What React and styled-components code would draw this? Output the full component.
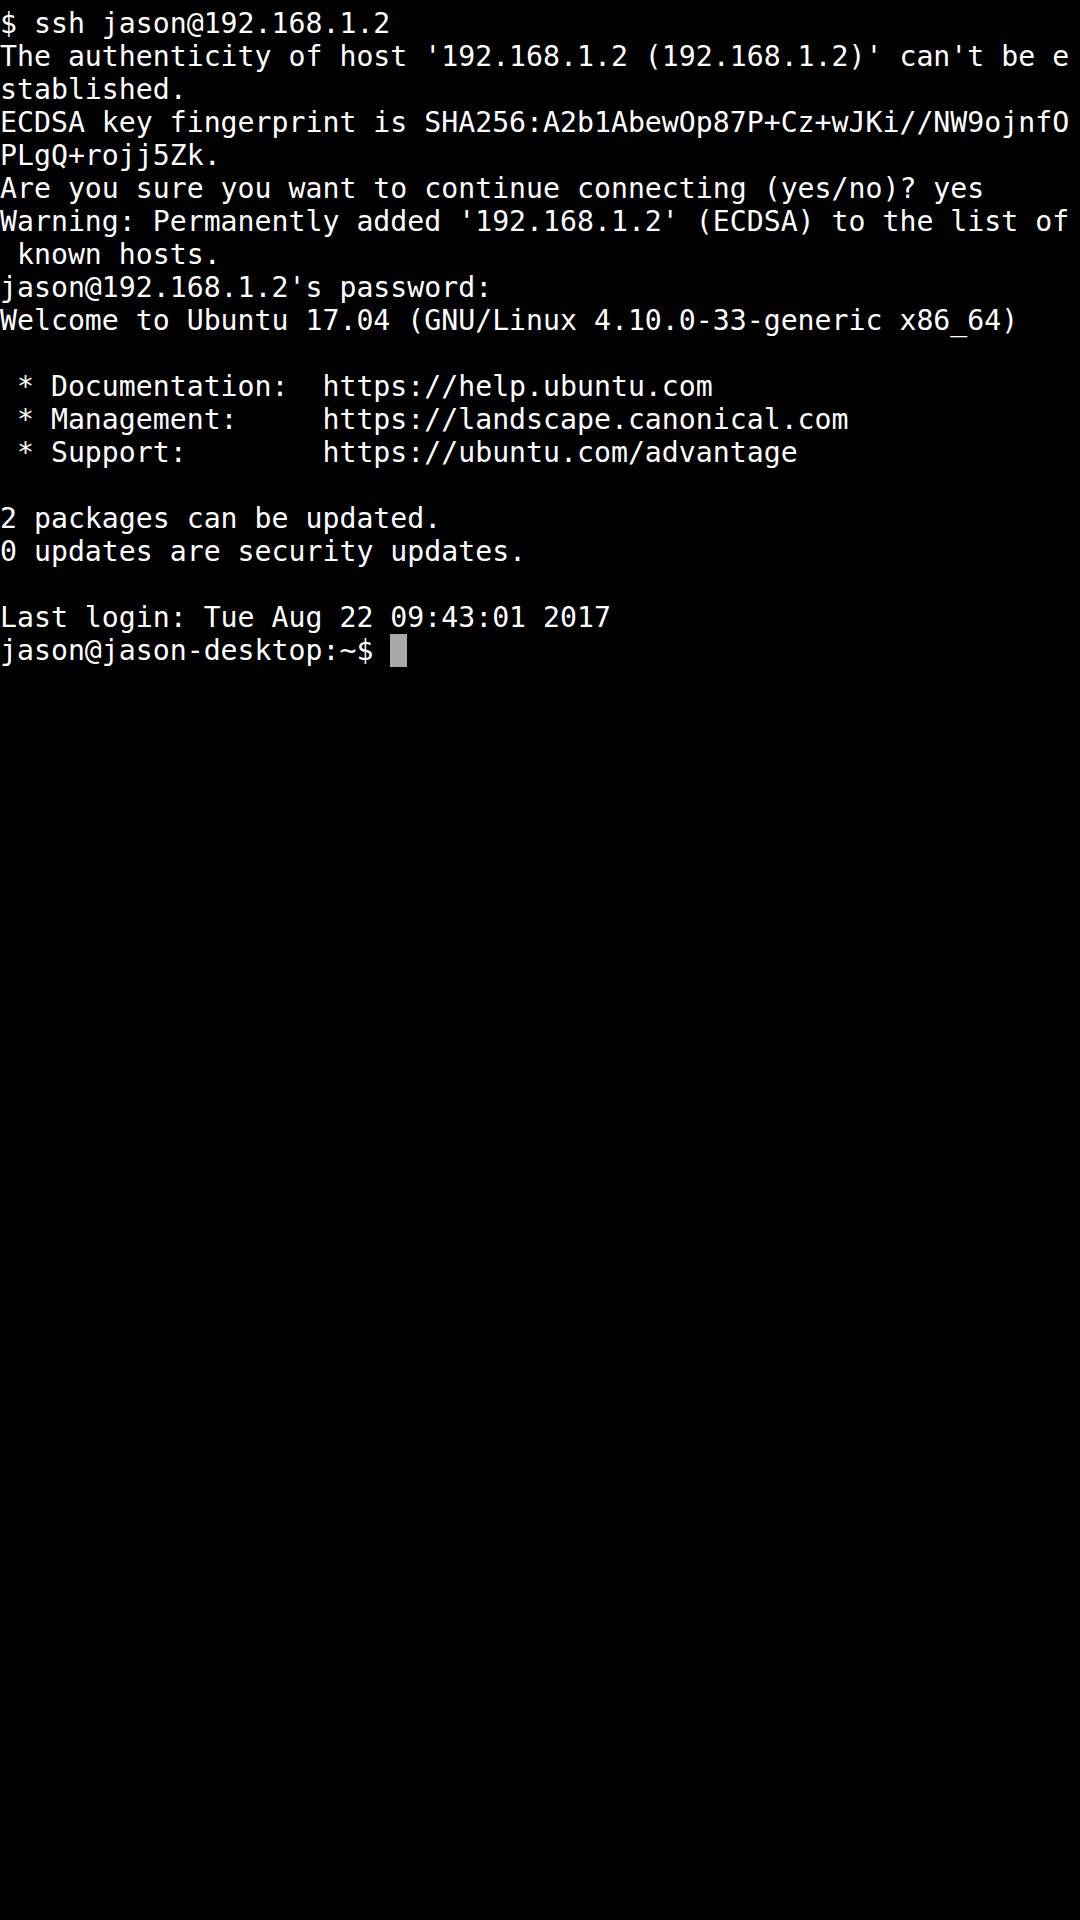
import styled, { createGlobalStyle } from "styled-components";

const GlobalStyle = createGlobalStyle`
  html, body {
    margin: 0;
    padding: 0;
    background: #000;
  }
`;

const Screen = styled.main`
  width: 1080px;
  height: 1920px;
  background: #000;
  color: #fff;
  font-family: "DejaVu Sans Mono", "Liberation Mono", monospace;
  font-size: 28.2px;
  line-height: 33px;
  padding-top: 7px;
  box-sizing: border-box;
  overflow: hidden;
`;

const Line = styled.div`
  white-space: pre;
  height: 33px;
`;

const Cursor = styled.span`
  display: inline-block;
  width: 17px;
  height: 33px;
  background: #a8a8a8;
  vertical-align: top;
`;

const lines = [
  "$ ssh jason@192.168.1.2",
  "The authenticity of host '192.168.1.2 (192.168.1.2)' can't be e",
  "stablished.",
  "ECDSA key fingerprint is SHA256:A2b1AbewOp87P+Cz+wJKi//NW9ojnfO",
  "PLgQ+rojj5Zk.",
  "Are you sure you want to continue connecting (yes/no)? yes",
  "Warning: Permanently added '192.168.1.2' (ECDSA) to the list of",
  " known hosts.",
  "jason@192.168.1.2's password:",
  "Welcome to Ubuntu 17.04 (GNU/Linux 4.10.0-33-generic x86_64)",
  "",
  " * Documentation:  https://help.ubuntu.com",
  " * Management:     https://landscape.canonical.com",
  " * Support:        https://ubuntu.com/advantage",
  "",
  "2 packages can be updated.",
  "0 updates are security updates.",
  "",
  "Last login: Tue Aug 22 09:43:01 2017",
];

export default function App() {
  return (
    <>
      <GlobalStyle />
      <Screen>
        {lines.map((text, i) => (
          <Line key={i}>{text}</Line>
        ))}
        <Line>
          {"jason@jason-desktop:~$ "}
          <Cursor />
        </Line>
      </Screen>
    </>
  );
}
